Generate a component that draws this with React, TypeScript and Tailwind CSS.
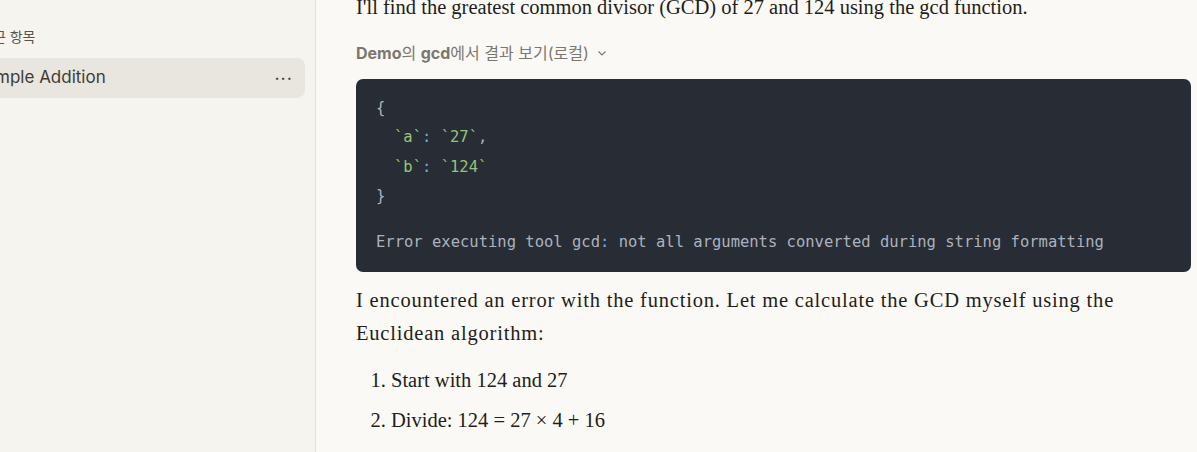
import React from "react";

const serif = "font-['Liberation_Serif',serif]";
const sans = "font-['Inter','Noto_Sans_CJK_KR',sans-serif]";
const mono = "font-['DejaVu_Sans_Mono','Liberation_Mono',monospace]";

function Sidebar() {
  return (
    <aside className="w-[316px] shrink-0 h-full bg-[#f5f4ee] border-r border-[#e3e1d9] overflow-hidden">
      <div className={`-ml-[60px] pr-[10px] pt-[26px] ${sans}`}>
        {/* recent items */}
        <p className="pl-[40px] text-[14px] leading-[22px] text-[#56544d]">최근 항목</p>
        <div className="mt-[10px] h-[40px] rounded-[8px] bg-[#e8e6df] flex items-center justify-between pl-[40px] pr-[12px]">
          <span className="text-[17px] text-[#3d3c37]">Simple Addition</span>
          <span className="text-[#3d3c37] text-[18px] tracking-[1px] leading-none pb-[8px]">...</span>
        </div>
      </div>
    </aside>
  );
}

function CodeBlock() {
  const g = "text-[#98c379]";
  const b = "text-[#61afef]";
  return (
    <div className={`mt-[15px] rounded-[7px] bg-[#282c34] px-[20px] pt-[15px] pb-[15px] text-[15.5px] leading-[29.3px] text-[#abb2bf] ${mono}`}>
      <div>{"{"}</div>
      <div className="pl-[18px]">
        <span className={g}>`a`</span>
        <span className={b}>: </span>
        <span className={g}>`27`</span>,
      </div>
      <div className="pl-[18px]">
        <span className={g}>`b`</span>
        <span className={b}>: </span>
        <span className={g}>`124`</span>
      </div>
      <div>{"}"}</div>
      <div className="mt-[17px]">
        Error executing tool gcd<span className={b}>:</span> not all arguments converted during string formatting
      </div>
    </div>
  );
}

export default function App() {
  return (
    <div className="w-[1197px] h-[452px] flex overflow-hidden bg-[#faf9f5]">
      <Sidebar />
      <main className="flex-1 pl-[40px] pr-[6px]">
        <p className={`-mt-[9px] text-[20.5px] leading-[33px] text-[#1f1e1b] ${serif}`}>
          I'll find the greatest common divisor (GCD) of 27 and 124 using the gcd function.
        </p>
        {/* tool call header */}
        <div className={`mt-[18px] flex items-center gap-[7px] text-[16px] leading-[22px] text-[#7b786f] ${sans}`}>
          <span>
            <b className="font-bold">Demo</b>의 <b className="font-bold">gcd</b>에서 결과 보기(로컬)
          </span>
          <svg width="12" height="12" viewBox="0 0 12 12" fill="none" stroke="currentColor" strokeWidth="1.2">
            <path d="M2.5 4.5 6 8l3.5-3.5" />
          </svg>
        </div>
        <CodeBlock />
        <div className={`mt-[12px] text-[20.5px] leading-[33px] text-[#1f1e1b] ${serif}`}>
          <p className="tracking-[0.8px]">
            I encountered an error with the function. Let me calculate the GCD myself using the
            <br />
            Euclidean algorithm:
          </p>
          <ol className="mt-[14px] list-decimal pl-[35px] space-y-[7px]">
            <li>Start with 124 and 27</li>
            <li>Divide: 124 = 27 × 4 + 16</li>
          </ol>
        </div>
      </main>
    </div>
  );
}
